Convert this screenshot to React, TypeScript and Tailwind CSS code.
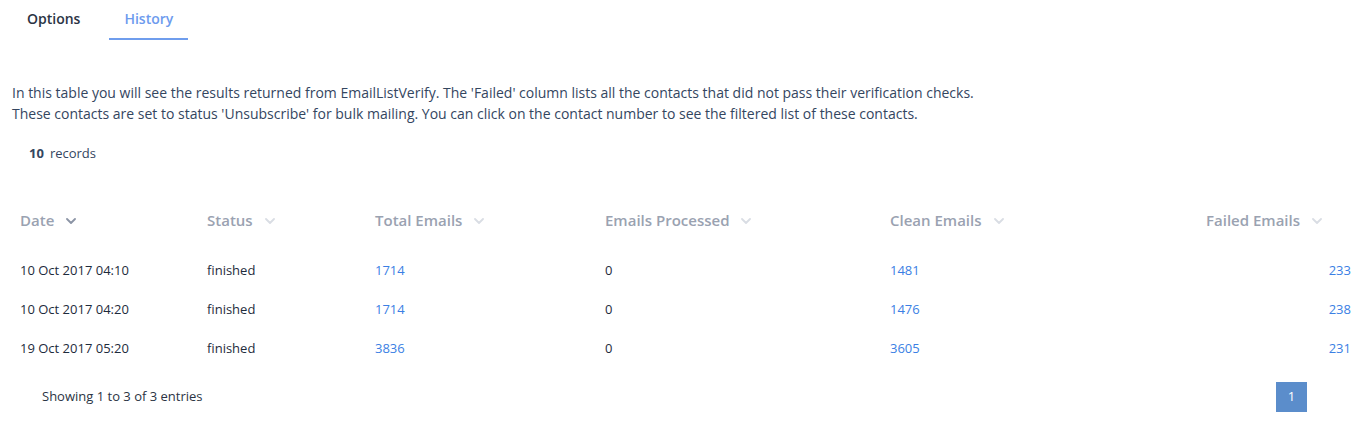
import type { ReactNode } from 'react';

type Row = { date: string; status: string; total: number; processed: number; clean: number; failed: number };

const rows: Row[] = [
  { date: '10 Oct 2017 04:10', status: 'finished', total: 1714, processed: 0, clean: 1481, failed: 233 },
  { date: '10 Oct 2017 04:20', status: 'finished', total: 1714, processed: 0, clean: 1476, failed: 238 },
  { date: '19 Oct 2017 05:20', status: 'finished', total: 3836, processed: 0, clean: 3605, failed: 231 },
];

function Chevron({ active }: { active?: boolean }) {
  return (
    <svg width="10" height="6" viewBox="0 0 10 6" className="ml-3 inline-block">
      <path
        d="M1 1l4 4 4-4"
        fill="none"
        stroke={active ? '#8b94a5' : '#d9dde4'}
        strokeWidth="1.8"
        strokeLinecap="round"
        strokeLinejoin="round"
      />
    </svg>
  );
}

function Th({ children, active, right, w }: { children: ReactNode; active?: boolean; right?: boolean; w?: string }) {
  return (
    <th
      className={`h-[40px] px-2 text-[15px] font-semibold text-[#9aa2b1] ${right ? 'pr-[37px] text-right' : 'text-left'} ${w ?? ''}`}
    >
      <span className="inline-flex items-center">
        {children}
        <Chevron active={active} />
      </span>
    </th>
  );
}

function Link({ n }: { n: number }) {
  return <a className="cursor-pointer text-[#3b7fe4]">{n}</a>;
}

export default function App() {
  return (
    <div className="min-h-[429px] bg-white font-['Open_Sans',sans-serif] text-[#1e2b3c]">
      <div className="flex h-[40px] items-end pl-[12px]">
        <div className="px-[15px] pb-[11px] text-[14px] font-semibold text-[#2b3444]">Options</div>
        <div className="ml-[14px] border-b-2 border-[#6f9ded] px-[15px] pb-[9px] text-[14px] font-semibold text-[#6d9bee]">
          History
        </div>
      </div>

      <p className="mt-[42px] pl-[12px] text-[14px] leading-[21px] text-[#34465f]">
        In this table you will see the results returned from EmailListVerify. The 'Failed' column lists all the contacts that did not pass their verification checks.
        <br />
        These contacts are set to status 'Unsubscribe' for bulk mailing. You can click on the contact number to see the filtered list of these contacts.
      </p>

      <div className="mt-[20px] pl-[29px] text-[13px] text-[#34465f]">
        <span className="font-bold">10</span>
        <span className="ml-[6px]">records</span>
      </div>

      <table className="mt-[37px] ml-[12px] w-[1347px] table-fixed border-collapse">
        <thead>
          <tr>
            <Th active w="w-[187px]">Date</Th>
            <Th w="w-[168px]">Status</Th>
            <Th w="w-[230px]">Total Emails</Th>
            <Th w="w-[285px]">Emails Processed</Th>
            <Th w="w-[300px]">Clean Emails</Th>
            <Th right>Failed Emails</Th>
          </tr>
        </thead>
        <tbody className="text-[13px]">
          {rows.map((r, i) => (
            <tr key={i} className={`h-[39px] ${i === 0 ? 'align-bottom' : ''}`}>
              <td className={`px-2 ${i === 0 ? 'pb-[10px] h-[50px]' : ''}`}>{r.date}</td>
              <td className={`px-2 ${i === 0 ? 'pb-[10px]' : ''}`}>{r.status}</td>
              <td className={`px-2 ${i === 0 ? 'pb-[10px]' : ''}`}><Link n={r.total} /></td>
              <td className={`px-2 ${i === 0 ? 'pb-[10px]' : ''}`}>{r.processed}</td>
              <td className={`px-2 ${i === 0 ? 'pb-[10px]' : ''}`}><Link n={r.clean} /></td>
              <td className={`px-2 text-right ${i === 0 ? 'pb-[10px]' : ''}`}><Link n={r.failed} /></td>
            </tr>
          ))}
        </tbody>
      </table>

      <div className="mt-[13px] flex items-center justify-between pl-[42px] pr-[63px]">
        <span className="text-[13px] text-[#2b3444]">Showing 1 to 3 of 3 entries</span>
        <span className="flex h-[30px] w-[31px] items-center justify-center bg-[#5b8dcb] text-[13px] text-white">1</span>
      </div>
    </div>
  );
}
